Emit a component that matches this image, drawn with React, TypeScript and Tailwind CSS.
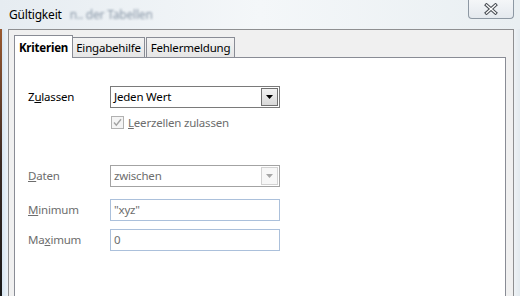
import React from 'react';

const font = { fontFamily: '"Noto Sans", "Liberation Sans", sans-serif' };

function Arrow({ disabled }: { disabled?: boolean }) {
  return (
    <svg width="7" height="4" viewBox="0 0 7 4">
      <path d="M0 0h7L3.5 4z" fill={disabled ? '#a6a6a6' : '#000'} />
    </svg>
  );
}

function Combo({ value, disabled }: { value: string; disabled?: boolean }) {
  return (
    <div
      className={`flex h-[22px] w-[170px] items-center border p-px ${
        disabled ? 'border-[#a3a3a3]' : 'border-[#7a7a7a]'
      }`}
    >
      <span className={`flex-1 pl-[2px] leading-none ${disabled ? 'text-[#6d6d6d]' : 'text-black'}`}>{value}</span>
      <div
        className={`flex h-[18px] w-[17px] items-center justify-center border ${
          disabled
            ? 'border-[#d2d2d2] bg-[#f7f7f7]'
            : 'border-[#707070] bg-gradient-to-b from-[#f2f2f2] to-[#d9d9d9]'
        }`}
      >
        <Arrow disabled={disabled} />
      </div>
    </div>
  );
}

function Field({ value }: { value: string }) {
  return (
    <div className="flex h-[22px] w-[170px] items-center border border-[#abc0db] bg-white pl-[3px] text-[#6d6d6d]">
      {value}
    </div>
  );
}

export default function App() {
  return (
    <div
      className="flex h-[296px] w-[520px] flex-col overflow-hidden bg-gradient-to-r from-[#e6ecf1] via-[#f4f7f9] to-[#e9eff2] text-[11.5px] tracking-[-0.2px]"
      style={font}
    >
      {/* title bar */}
      <div className="flex h-[29px] items-start">
        <span className="pl-[9px] pt-[6px] text-[12px] text-black">Gültigkeit</span>
        <span className="pl-[8px] pt-[6px] text-[12px] text-[#8a98a8] blur-[1.2px]">n.. der Tabellen</span>
        <div className="ml-auto mr-[6px] flex h-[19px] w-[46px] items-center justify-center rounded-b-[4px] border border-t-0 border-[#8d98a3] bg-gradient-to-b from-[#f4f6f8] to-[#e4e9ee]">
          <svg width="14" height="12" viewBox="0 0 14 12">
            <path d="M2.5 2l9 8M11.5 2l-9 8" stroke="#4a4f55" strokeWidth="3.4" strokeLinecap="square" />
            <path d="M2.5 2l9 8M11.5 2l-9 8" stroke="#fff" strokeWidth="1.3" strokeLinecap="square" />
          </svg>
        </div>
      </div>

      <div className="flex flex-1">
        {/* left frame */}
        <div className="flex w-[8px]">
          <div className="w-[2px] bg-gradient-to-b from-[#9a5a30] via-[#3a2a24] to-[#1a1a1a]" />
          <div className="w-[6px] bg-gradient-to-r from-[#d7e6f3] to-[#eef3f7]" />
        </div>

        {/* client area */}
        <div className="flex w-[506px] flex-col border border-b-0 border-[#8e8f91] bg-[#f0f0f0] pl-[5px] pr-[7px] pt-[5px]">
          {/* tabs */}
          <div className="flex h-[22px] items-end">
            <div className="relative z-10 -mb-px flex h-[23px] w-[59px] items-start justify-center border border-b-0 border-[#898c95] bg-white pt-[3px] font-bold text-black">
              Kriterien
            </div>
            <div className="flex h-[20px] w-[72px] items-center justify-center border border-b-0 border-l-0 border-[#898c95] bg-gradient-to-b from-[#f3f3f3] to-[#e6e6e6] text-black">
              Eingabehilfe
            </div>
            <div className="ml-px flex h-[20px] w-[89px] items-center justify-center border border-b-0 border-[#898c95] bg-gradient-to-b from-[#f3f3f3] to-[#e6e6e6] text-black">
              Fehlermeldung
            </div>
          </div>

          {/* tab pane */}
          <div className="flex flex-1 flex-col border border-b-0 border-[#898c95] bg-white pl-[13px] pt-[28px]">
            <div className="flex items-center">
              <span className="w-[82px] text-black">
                Z<span className="underline">u</span>lassen
              </span>
              <Combo value="Jeden Wert" />
            </div>

            <div className="mt-[8px] flex h-[13px] items-center pl-[83px] leading-[13px]">
              <div className="flex h-[13px] w-[13px] items-center justify-center border border-[#b1b1b1] bg-[#f4f4f4]">
                <svg width="9" height="9" viewBox="0 0 9 9">
                  <path d="M1 4.5l2.3 2.6L8 1.2" stroke="#a2a2a2" strokeWidth="1.4" fill="none" />
                </svg>
              </div>
              <span className="pl-[4px] text-[#6d6d6d]">
                <span className="underline">L</span>eerzellen zulassen
              </span>
            </div>

            <div className="mt-[36px] flex items-center">
              <span className="w-[82px] text-[#6d6d6d]">
                <span className="underline">D</span>aten
              </span>
              <Combo value="zwischen" disabled />
            </div>

            <div className="mt-[12px] flex items-center">
              <span className="w-[82px] text-[#6d6d6d]">
                <span className="underline">M</span>inimum
              </span>
              <Field value={'"xyz"'} />
            </div>

            <div className="mt-[8px] flex items-center">
              <span className="w-[82px] text-[#6d6d6d]">
                Ma<span className="underline">x</span>imum
              </span>
              <Field value="0" />
            </div>
          </div>
        </div>

        {/* right frame */}
        <div className="w-[6px] bg-gradient-to-r from-[#eef2f5] to-[#e2e9ee]" />
      </div>
    </div>
  );
}
